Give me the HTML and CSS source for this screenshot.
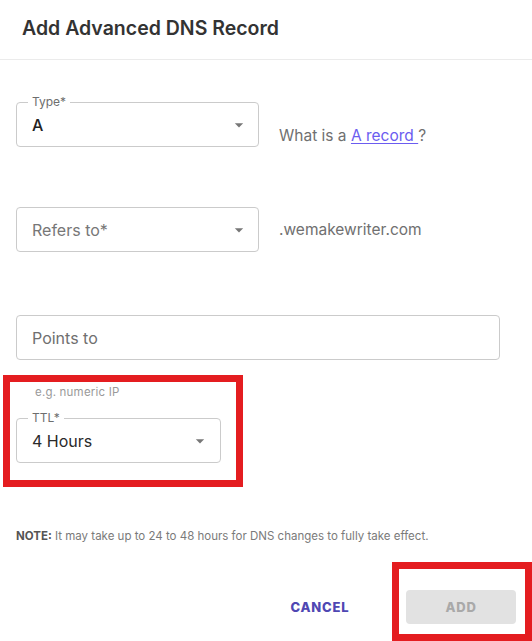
FILE: index.html
```html
<!DOCTYPE html>
<html lang="en">
<head>
<meta charset="utf-8">
<title>Add Advanced DNS Record</title>
<link rel="stylesheet" href="styles.css">
</head>
<body>
<div class="dialog">
  <header class="dialog-header">
    <h1 class="dialog-title">Add Advanced DNS Record</h1>
  </header>
  <div class="dialog-body">
    <div class="row row-type">
      <div class="field field-select">
        <span class="field-label">Type*</span>
        <span class="field-value">A</span>
        <svg class="arrow" viewBox="0 0 24 24" width="20" height="20"><path d="M7 10l5 5 5-5z"/></svg>
      </div>
      <p class="side-text side-help">What is a <a href="#" class="link">A record </a>?</p>
    </div>
    <div class="row row-refers">
      <div class="field field-select">
        <span class="field-placeholder">Refers to*</span>
        <svg class="arrow" viewBox="0 0 24 24" width="20" height="20"><path d="M7 10l5 5 5-5z"/></svg>
      </div>
      <p class="side-text">.wemakewriter.com</p>
    </div>
    <div class="row row-points">
      <div class="field field-wide">
        <span class="field-placeholder">Points to</span>
      </div>
    </div>
    <p class="helper">e.g. numeric IP</p>
    <div class="row row-ttl">
      <div class="field field-ttl">
        <span class="field-label">TTL*</span>
        <span class="field-value field-value-ttl">4 Hours</span>
        <svg class="arrow" viewBox="0 0 24 24" width="20" height="20"><path d="M7 10l5 5 5-5z"/></svg>
      </div>
    </div>
    <p class="note"><strong>NOTE:</strong> It may take up to 24 to 48 hours for DNS changes to fully take effect.</p>
  </div>
  <div class="dialog-actions">
    <button class="btn btn-text" type="button">CANCEL</button>
    <button class="btn btn-disabled" type="button" disabled>ADD</button>
  </div>
  <div class="annot annot-ttl"></div>
  <div class="annot annot-add"></div>
</div>
</body>
</html>
```

FILE: styles.css
```css
* { box-sizing: border-box; }

html, body {
  margin: 0;
  padding: 0;
  background: #ffffff;
}

body {
  font-family: "Inter", "Noto Sans", "Liberation Sans", sans-serif;
  color: #222222;
  overflow: hidden;
}

.dialog {
  position: relative;
  width: 532px;
  height: 641px;
  background: #ffffff;
}

.dialog-header {
  padding: 16px 22px 19px;
  border-bottom: 1px solid #ebebeb;
}

.dialog-title {
  margin: 0;
  font-size: 19.5px;
  line-height: 24px;
  font-weight: 600;
  color: #333333;
}

.dialog-body {
  display: flex;
  flex-direction: column;
  padding: 0 16px;
}

.row {
  display: flex;
  align-items: center;
}

.row-type {
  margin-top: 42px;
  align-items: flex-end;
}

.row-refers { margin-top: 60px; }
.row-points { margin-top: 63px; }
.row-ttl { margin-top: 19px; }

.field {
  position: relative;
  display: flex;
  align-items: center;
  height: 45px;
  border: 1px solid #cbcbcb;
  border-radius: 4px;
  padding: 0 15px;
  background: #ffffff;
}

.field-select { width: 243px; padding-right: 9px; }
.field-wide { width: 484px; }
.field-ttl { width: 205px; padding-right: 10px; }

.field-label {
  position: absolute;
  top: -8px;
  left: 11px;
  padding: 0 4px;
  background: #ffffff;
  font-size: 12px;
  line-height: 14px;
  color: #6e6e6e;
}

.field-value {
  flex: 1;
  font-size: 16px;
  line-height: 20px;
  font-weight: 500;
  color: #222222;
}

.field-value-ttl {
  font-weight: 400;
  color: #2a2a2a;
}

.field-placeholder {
  flex: 1;
  font-size: 16px;
  line-height: 20px;
  color: #777777;
}

.arrow {
  flex: none;
  fill: #777777;
}

.field-wide .field-placeholder { color: #6f6f6f; }

.side-text {
  margin: 0 0 0 20px;
  font-size: 15.5px;
  line-height: 20px;
  color: #707070;
}

.side-help {
  margin-bottom: 1px;
}

.link {
  color: #6b5cf0;
  text-decoration: underline;
  text-underline-offset: 2px;
}

.helper {
  margin: 25px 0 0 19px;
  font-size: 11.5px;
  line-height: 14px;
  color: #9a9a9a;
  letter-spacing: 0.2px;
}

.note {
  margin: 66px 0 0;
  font-size: 11.5px;
  line-height: 14px;
  color: #7a7a7a;
}

.note strong {
  font-weight: 700;
  color: #555555;
}

.dialog-actions {
  display: flex;
  justify-content: flex-end;
  align-items: center;
  gap: 50px;
  padding: 47px 16px 0;
}

.btn {
  font-family: "Inter", "Noto Sans", "Liberation Sans", sans-serif;
  font-size: 13px;
  font-weight: 800;
  letter-spacing: 0.8px;
  border: none;
  border-radius: 4px;
  height: 34px;
  background: transparent;
  padding: 0;
}

.btn-text {
  color: #4f47b3;
  width: 72px;
}

.btn-disabled {
  width: 110px;
  background: #e2e2e2;
  color: #a9a9a9;
}

.annot {
  position: absolute;
  border: 7px solid #e41d20;
  pointer-events: none;
}

.annot-ttl {
  left: 3px;
  top: 375px;
  width: 240px;
  height: 112px;
}

.annot-add {
  left: 392px;
  top: 562px;
  width: 140px;
  height: 79px;
}
```
